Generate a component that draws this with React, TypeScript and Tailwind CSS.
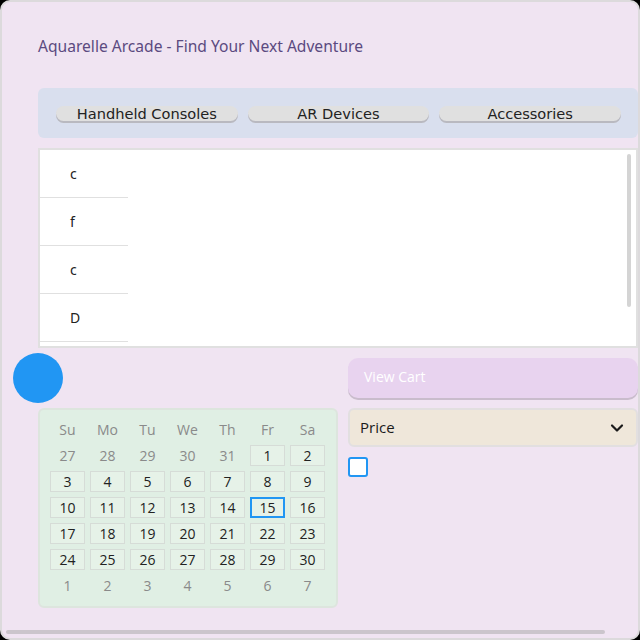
import React from "react";

const tabs = ["Handheld Consoles", "AR Devices", "Accessories"];
const items = ["c", "f", "c", "D", ""];
const weekDays = ["Su", "Mo", "Tu", "We", "Th", "Fr", "Sa"];

type Day = { n: number; out: boolean };

const days: Day[] = [
  ...[27, 28, 29, 30, 31].map((n) => ({ n, out: true })),
  ...Array.from({ length: 30 }, (_, i) => ({ n: i + 1, out: false })),
  ...[1, 2, 3, 4, 5, 6, 7].map((n) => ({ n, out: true })),
];

const Calendar: React.FC = () => {
  return (
    <div className="mt-[5px] w-[300px] rounded-[6px] border-2 border-[#dde5de] bg-[#e0efe4] px-[10px] pb-[10px] pt-[9px] font-['Open_Sans',sans-serif]">
      <div className="grid grid-cols-[repeat(7,35px)] grid-rows-[repeat(7,21px)] gap-[5px]">
        {weekDays.map((d) => (
          <div key={d} className="flex h-[21px] items-center justify-center text-[14px] text-[#8a8a8a]">
            {d}
          </div>
        ))}
        {days.map((d, i) =>
          d.out ? (
            <div key={i} className="flex h-[21px] items-center justify-center text-[14px] text-[#8a8a8a]">
              {d.n}
            </div>
          ) : (
            <div
              key={i}
              className={
                d.n === 15
                  ? "flex h-[21px] items-center justify-center border-2 border-[#2196f3] bg-[#e6f2e8] text-[14px] text-[#222]"
                  : "flex h-[21px] items-center justify-center border border-[#d6dcd7] bg-[#e6f2e8] text-[14px] text-[#222]"
              }
            >
              {d.n}
            </div>
          )
        )}
      </div>
    </div>
  );
};

const App: React.FC = () => {
  return (
    <div className="h-[640px] w-[640px] bg-black">
      <div className="relative h-full w-full overflow-hidden rounded-[10px] border-2 border-[#dcdadc] bg-[#f0e4f2]">
        <div className="w-[672px] px-[36px] pt-[34px]">
          <h1 className="h-[20px] text-[15.6px] leading-[20px] text-[#5b4a80] font-['Noto_Sans',sans-serif]">
            Aquarelle Arcade - Find Your Next Adventure
          </h1>

          <div className="mt-[32px] flex h-[50px] items-center gap-[10px] rounded-[6px] bg-[#d9dfee] pl-[18px] pr-[17px] font-['DejaVu_Sans',sans-serif]">
            {tabs.map((t) => (
              <button
                key={t}
                className="h-[15px] flex-1 rounded-full bg-[#e0e0e0] text-[14.6px] leading-[15px] text-[#222] shadow-[0_2px_0_#b9b9c0]"
              >
                {t}
              </button>
            ))}
          </div>

          <div className="relative mt-[10px] h-[200px] overflow-hidden border-2 border-[#e0e0e0] bg-white font-['Noto_Sans',sans-serif]">
            <div className="w-[88px]">
              {items.map((it, i) => (
                <div
                  key={i}
                  className="flex h-[48px] items-center border-b border-[#e0e0e0] pl-[30px] text-[14px] text-[#222]"
                >
                  {it}
                </div>
              ))}
            </div>
            <div className="absolute right-[5px] top-[4px] h-[153px] w-[4px] rounded-full bg-[#d4d4d4]" />
          </div>

          <div className="mt-[5px] flex gap-[10px]">
            <div className="flex w-[300px] flex-col">
              <div className="-ml-[25px] h-[50px] w-[50px] rounded-full bg-[#2196f3]" />
              <Calendar />
            </div>
            <div className="flex w-[290px] flex-col gap-[10px] pt-[5px] font-['Open_Sans',sans-serif]">
              <button className="h-[40px] rounded-[10px] bg-[#e8d3ef] pb-[4px] pl-[16px] text-left text-[14px] text-white shadow-[0_2px_0_#c9bccc]">
                View Cart
              </button>
              <div className="flex h-[39px] items-center justify-between rounded-[6px] border-2 border-[#e2dfe0] bg-[#efe7da] pl-[10px] pr-[12px] text-[15px] text-[#1a1a1a]">
                <span>Price</span>
                <svg width="14" height="10" viewBox="0 0 14 10" fill="none">
                  <path d="M2 2.5 L7 7.5 L12 2.5" stroke="#1a1a1a" strokeWidth="2.2" strokeLinecap="round" strokeLinejoin="round" />
                </svg>
              </div>
              <div className="h-[20px] w-[20px] rounded-[3px] border-2 border-[#2196f3] bg-white" />
            </div>
          </div>
        </div>

        <div className="absolute bottom-[4px] left-[4px] h-[4px] w-[599px] rounded-full bg-[#cbc5cc]" />
      </div>
    </div>
  );
};

export default App;
